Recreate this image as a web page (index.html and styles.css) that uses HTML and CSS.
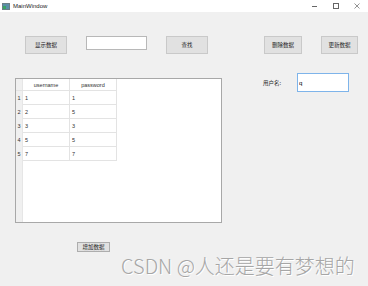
FILE: index.html
```html
<!DOCTYPE html>
<html lang="zh">

<head>
    <meta charset="UTF-8">
    <title>MainWindow</title>
    <link rel="stylesheet" href="styles.css">
</head>

<body>
    <div class="window">
        <div class="titlebar">
            <div class="title">
                <span class="app-icon"><span class="app-icon-inner"></span></span>
                <span>MainWindow</span>
            </div>
            <div class="controls">
                <span class="ctl ctl-min"></span>
                <span class="ctl ctl-max"></span>
                <span class="ctl ctl-close">
                    <svg width="6" height="6" viewBox="0 0 6 6">
                        <path d="M0.5 0.5 L5.5 5.5 M5.5 0.5 L0.5 5.5" stroke="#666" stroke-width="0.7" fill="none" />
                    </svg>
                </span>
            </div>
        </div>

        <div class="content">
            <div class="toolbar">
                <button class="btn btn-show">显示数据</button>
                <input type="text" class="search-input">
                <button class="btn btn-find">查找</button>
                <button class="btn btn-delete">删除数据</button>
                <button class="btn btn-update">更新数据</button>
            </div>

            <div class="main">
                <div class="left">
                    <div class="table-frame">
                        <div class="vheader"></div>
                        <table class="grid">
                            <thead>
                                <tr>
                                    <th class="corner"></th>
                                    <th>username</th>
                                    <th>password</th>
                                </tr>
                            </thead>
                            <tbody>
                                <tr><td class="rownum">1</td><td>1</td><td>1</td></tr>
                                <tr><td class="rownum">2</td><td>2</td><td>5</td></tr>
                                <tr><td class="rownum">3</td><td>3</td><td>3</td></tr>
                                <tr><td class="rownum">4</td><td>5</td><td>5</td></tr>
                                <tr><td class="rownum">5</td><td>7</td><td>7</td></tr>
                            </tbody>
                        </table>
                    </div>
                    <button class="btn btn-add">增加数据</button>
                </div>

                <div class="right">
                    <label class="user-label">用户名:</label>
                    <input type="text" class="user-input" value="q">
                </div>
            </div>
        </div>

        <div class="watermark">CSDN @人还是要有梦想的</div>
    </div>
</body>

</html>
```

FILE: styles.css
```css
/* General */
body {
    margin: 0;
    padding: 0;
    font-family: 'Noto Sans CJK SC', 'Liberation Sans', sans-serif;
    background-color: #f0f0f0;
}

.window {
    position: relative;
    width: 368px;
    height: 286px;
    background-color: #f0f0f0;
    overflow: hidden;
}

/* Title bar */
.titlebar {
    height: 12px;
    background-color: #fff;
    display: flex;
    justify-content: space-between;
    align-items: center;
}

.title {
    display: flex;
    align-items: center;
    font-family: 'Liberation Sans', sans-serif;
    font-size: 6px;
    color: #222;
    padding-left: 2px;
}

.app-icon {
    width: 6px;
    height: 5px;
    background-color: #5b8fa8;
    border: 0.5px solid #6b7f88;
    margin-right: 3px;
    display: flex;
    align-items: flex-end;
}

.app-icon-inner {
    width: 3px;
    height: 3px;
    background-color: #3aa564;
}

.controls {
    display: flex;
    align-items: center;
    height: 12px;
    padding-right: 1px;
}

.ctl {
    width: 21px;
    height: 12px;
    display: flex;
    align-items: center;
    justify-content: center;
}

.ctl-min::before {
    content: '';
    width: 5px;
    height: 0.7px;
    background-color: #666;
}

.ctl-max::before {
    content: '';
    width: 4px;
    height: 4px;
    border: 0.7px solid #666;
}

/* Buttons */
.btn {
    font-family: 'Noto Sans CJK SC', sans-serif;
    font-size: 5.5px;
    color: #222;
    background-color: #e1e1e1;
    border: 1px solid #c9c9c9;
    padding: 0;
    height: 18px;
    width: 42px;
    box-sizing: border-box;
}

.toolbar {
    display: flex;
    align-items: flex-start;
    padding-top: 24px;
    padding-left: 25px;
}

.search-input {
    width: 61px;
    height: 14px;
    box-sizing: border-box;
    margin: 0 0 0 19px;
    border: 1px solid #b8b8b8;
    background-color: #fff;
    padding: 0;
}

.btn-find {
    margin-left: 19px;
}

.btn-delete {
    margin-left: 56px;
    width: 38px;
}

.btn-update {
    margin-left: 19px;
    width: 37px;
}

/* Main area */
.main {
    display: flex;
    align-items: flex-start;
    padding-top: 19px;
}

.left {
    display: flex;
    flex-direction: column;
    padding-left: 15px;
    padding-top: 5px;
}

.table-frame {
    position: relative;
    width: 207px;
    height: 145px;
    box-sizing: border-box;
    border: 1px solid #a8a8a8;
    background-color: #fff;
}

.vheader {
    position: absolute;
    left: 0;
    top: 0;
    bottom: 0;
    width: 6px;
    background-color: #f0f0f0;
    border-right: 1px solid #e6e6e6;
}

.grid {
    position: relative;
    border-collapse: collapse;
    font-family: 'Liberation Sans', sans-serif;
    font-size: 5.5px;
    color: #333;
}

.grid th {
    height: 11px;
    width: 46px;
    padding: 0;
    font-weight: normal;
    text-align: center;
    background-color: #fff;
    border-right: 1px solid #e3e3e3;
    border-bottom: 1px solid #e3e3e3;
}

.grid th.corner {
    width: 6px;
    background-color: #f0f0f0;
    border-right: 1px solid #e6e6e6;
}

.grid td {
    height: 13px;
    padding: 0 0 0 2px;
    border-right: 1px solid #e3e3e3;
    border-bottom: 1px solid #e3e3e3;
}

.grid td.rownum {
    padding: 0;
    text-align: center;
    background-color: #f0f0f0;
    border-right: 1px solid #e6e6e6;
    border-bottom: none;
}

.btn-add {
    width: 33px;
    height: 10px;
    margin-left: 62px;
    margin-top: 19px;
    border-color: #adadad;
}

/* Right form */
.right {
    display: flex;
    align-items: center;
    padding-left: 41px;
}

.user-label {
    font-size: 5.5px;
    color: #222;
    width: 34px;
}

.user-input {
    width: 52px;
    height: 19px;
    box-sizing: border-box;
    border: 1px solid #7eb4ea;
    background-color: #fff;
    font-family: 'Liberation Sans', sans-serif;
    font-size: 6px;
    padding: 0 0 0 1px;
    margin: 0;
}

/* Watermark */
.watermark {
    position: absolute;
    left: 121px;
    top: 251px;
    font-family: 'Noto Sans CJK SC', sans-serif;
    font-size: 20px;
    font-weight: 300;
    color: #a6a6a6;
    text-shadow: 1px 1px 0 #fff;
    white-space: nowrap;
}
```
